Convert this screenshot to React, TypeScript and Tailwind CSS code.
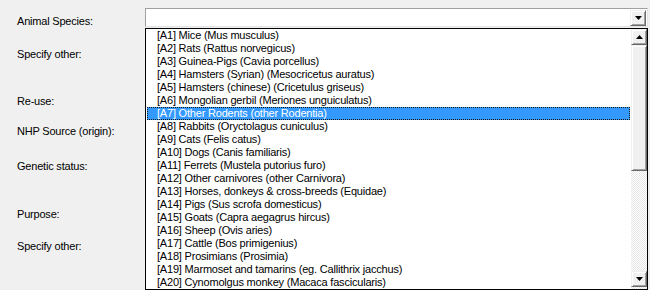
import React from 'react';

const species: string[] = [
  '[A1] Mice (Mus musculus)',
  '[A2] Rats (Rattus norvegicus)',
  '[A3] Guinea-Pigs (Cavia porcellus)',
  '[A4] Hamsters (Syrian) (Mesocricetus auratus)',
  '[A5] Hamsters (chinese) (Cricetulus griseus)',
  '[A6] Mongolian gerbil (Meriones unguiculatus)',
  '[A7] Other Rodents (other Rodentia)',
  '[A8] Rabbits (Oryctolagus cuniculus)',
  '[A9] Cats (Felis catus)',
  '[A10] Dogs (Canis familiaris)',
  '[A11] Ferrets (Mustela putorius furo)',
  '[A12] Other carnivores (other Carnivora)',
  '[A13] Horses, donkeys & cross-breeds (Equidae)',
  '[A14] Pigs (Sus scrofa domesticus)',
  '[A15] Goats (Capra aegagrus hircus)',
  '[A16] Sheep (Ovis aries)',
  '[A17] Cattle (Bos primigenius)',
  '[A18] Prosimians (Prosimia)',
  '[A19] Marmoset and tamarins (eg. Callithrix jacchus)',
  '[A20] Cynomolgus monkey (Macaca fascicularis)',
];

const SELECTED = 6;

// classic win32 raised button with a small triangle
const ArrowButton: React.FC<{ up?: boolean }> = ({ up }) => (
  <div className="w-[16px] h-[16px] shrink-0 bg-[#f0f0f0] border border-t-[#f0f0f0] border-l-[#f0f0f0] border-r-[#696969] border-b-[#696969] shadow-[inset_1px_1px_0_#fff,inset_-1px_-1px_0_#a0a0a0] flex items-center justify-center">
    <svg width="7" height="4" viewBox="0 0 7 4">
      {up ? <path d="M3.5 0 L7 4 L0 4 Z" fill="#000" /> : <path d="M0 0 L7 0 L3.5 4 Z" fill="#000" />}
    </svg>
  </div>
);

const rows = [
  { label: 'Animal Species:', h: 'h-[33px]' },
  { label: 'Specify other:', h: 'h-[47px]' },
  { label: 'Re-use:', h: 'h-[30px]' },
  { label: 'NHP Source (origin):', h: 'h-[35px]' },
  { label: 'Genetic status:', h: 'h-[48px]' },
  { label: 'Purpose:', h: 'h-[32px]' },
  { label: 'Specify other:', h: 'h-[48px]' },
  { label: 'Number of animals:', h: 'h-[30px]' },
];

const App: React.FC = () => {
  return (
    <div className="relative w-[650px] h-[290px] overflow-hidden bg-[#f0f0f0] text-black text-[11px] leading-[13px] tracking-[-0.2px] font-['Liberation_Sans',Arial,sans-serif]">
      {/* form rows */}
      <div className="flex flex-col pt-[8px]">
        {rows.map((row, i) => (
          <div key={i} className={`flex shrink-0 ${row.h}`}>
            <div className="w-[145px] shrink-0 pl-[17px] pt-[7px] whitespace-nowrap">{row.label}</div>
            {i === 0 && (
              <div className="w-[503px] h-[19px] bg-white border border-t-[#a0a0a0] border-l-[#a0a0a0] border-r-[#e3e3e3] border-b-[#e3e3e3] flex justify-end items-center pr-[1px]">
                <ArrowButton />
              </div>
            )}
          </div>
        ))}
      </div>

      {/* opened dropdown list */}
      <div className="absolute left-[145px] top-[28px] w-[503px] h-[262px] bg-white border border-black flex">
        <div className="flex-1 flex flex-col pl-[1px] pr-[1px]">
          {species.map((s, i) =>
            i === SELECTED ? (
              <div key={s} className="h-[13px] shrink-0 bg-[#3399ff] text-white border border-dotted border-[#1a1a1a] pl-[9px] leading-[11px] whitespace-nowrap">
                {s}
              </div>
            ) : (
              <div key={s} className="h-[13px] shrink-0 pl-[10px] whitespace-nowrap">
                {s}
              </div>
            )
          )}
        </div>
        {/* scrollbar */}
        <div className="w-[16px] flex flex-col bg-[image:repeating-conic-gradient(#ffffff_0_25%,#e6e6e6_0_50%)] bg-[length:2px_2px]">
          <ArrowButton up />
          <div className="h-[126px] shrink-0 bg-[#f0f0f0] border border-t-[#f0f0f0] border-l-[#f0f0f0] border-r-[#696969] border-b-[#696969] shadow-[inset_1px_1px_0_#fff,inset_-1px_-1px_0_#a0a0a0]" />
          <div className="flex-1" />
          <div className="mb-[2px]">
            <ArrowButton />
          </div>
        </div>
      </div>
    </div>
  );
};

export default App;
